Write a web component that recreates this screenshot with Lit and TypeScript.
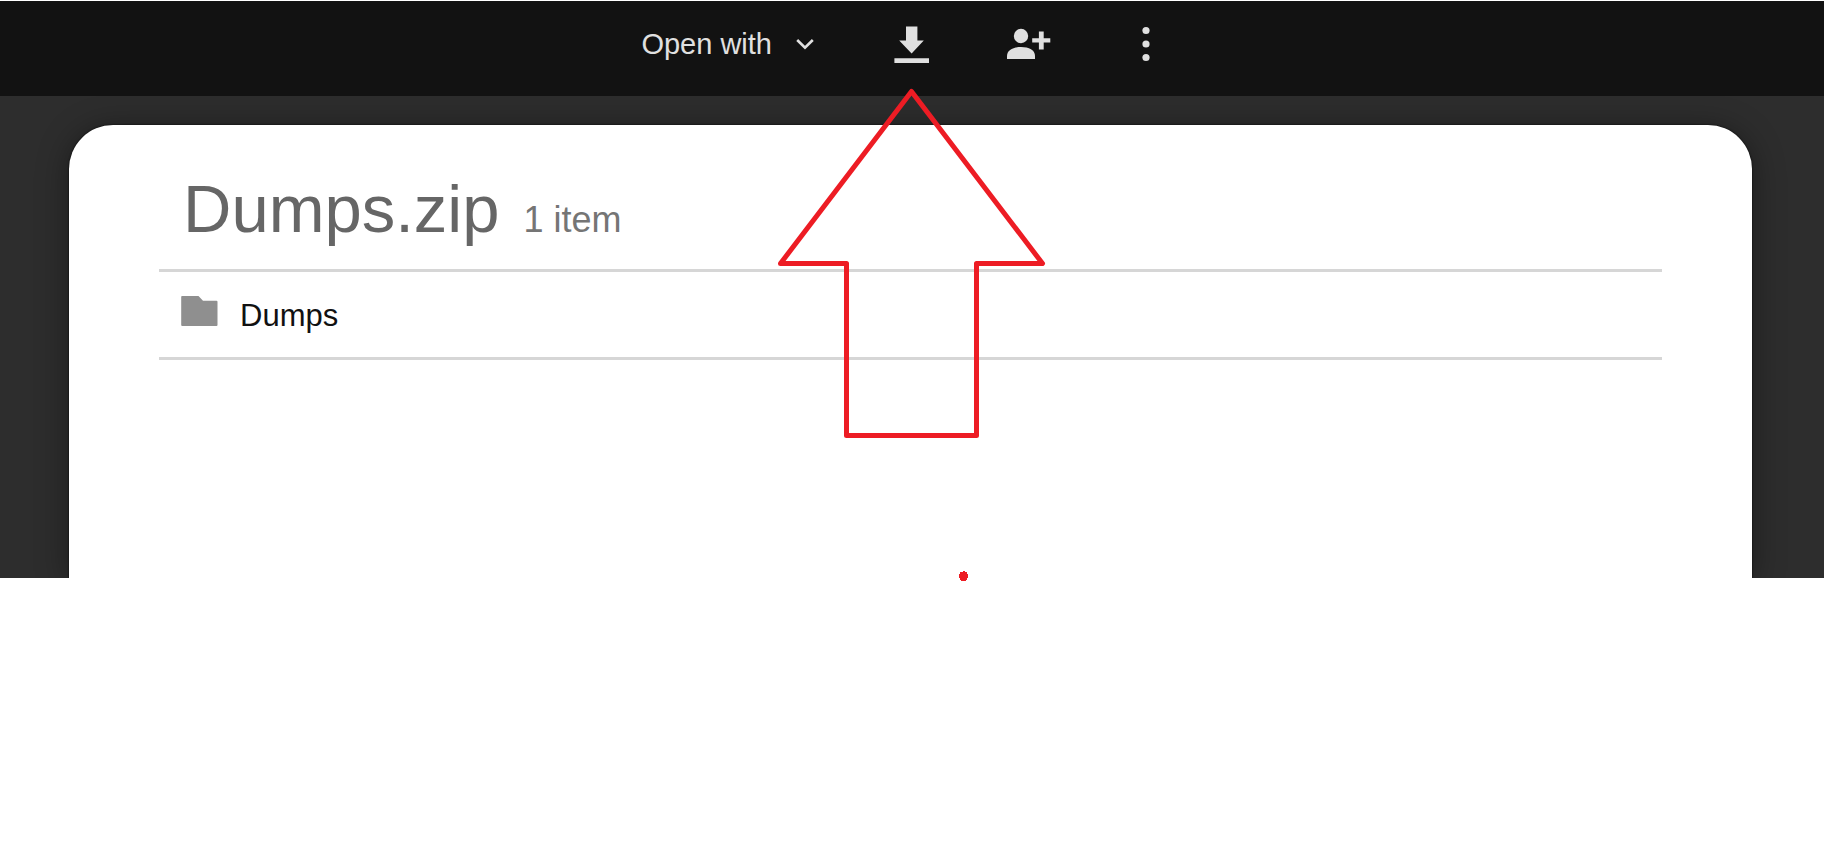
import { LitElement, html, css } from "lit";
import { customElement } from "lit/decorators.js";

interface ArchiveEntry {
  name: string;
}

@customElement("viewer-toolbar")
class ViewerToolbar extends LitElement {
  static styles = css`
    :host {
      display: grid;
      grid-template-columns: 1fr auto 1fr;
      align-items: center;
      height: 95px;
      padding-bottom: 10px;
      box-sizing: border-box;
      background: #121212;
    }
    button {
      display: flex;
      align-items: center;
      padding: 0;
      border: 0;
      background: none;
      color: #e0e0e0;
      font: 29px/34px "Liberation Sans", Arial, sans-serif;
      cursor: pointer;
    }
    svg {
      display: block;
      fill: currentColor;
    }
    .left {
      display: flex;
      justify-content: flex-end;
      padding-right: 80px;
    }
    .open {
      gap: 24px;
    }
    .right {
      display: flex;
      align-items: center;
      gap: 90px;
      padding-left: 77px;
    }
    .chevron {
      fill: none;
      stroke: currentColor;
      stroke-width: 2.6;
    }
  `;

  render() {
    return html`
      <div class="left">
        <button class="open">
          Open with
          <svg class="chevron" width="18" height="12" viewBox="0 0 18 12" aria-hidden="true">
            <path d="M1.2 2 9 9.6 16.8 2" />
          </svg>
        </button>
      </div>
      <button aria-label="Download">
        <svg width="36" height="38" viewBox="0 0 36 38" aria-hidden="true">
          <path d="M12 1.600h11.400v13.800h6.400L17.600 28.600 5.200 15.400H12zM.4 33.200h34.600v5H.4z" />
        </svg>
      </button>
      <div class="right">
        <button aria-label="Share">
          <svg width="44" height="32" viewBox="0 0 44 32" aria-hidden="true">
            <circle cx="14" cy="8" r="7.200" />
            <path d="M0 31v-3C0 22 6 19 14 19s14 3 14 9v3z" />
            <path d="M31.900 3.400h4.800v6.800h6.600v4.400h-6.600v7h-4.800v-7H25.200v-4.400h6.700z" />
          </svg>
        </button>
        <button aria-label="More actions">
          <svg width="10" height="36" viewBox="0 0 10 36" aria-hidden="true">
            <circle cx="5" cy="4.500" r="3.600" />
            <circle cx="5" cy="18" r="3.600" />
            <circle cx="5" cy="31.500" r="3.600" />
          </svg>
        </button>
      </div>
    `;
  }
}

@customElement("archive-card")
class ArchiveCard extends LitElement {
  static styles = css`
    :host {
      display: block;
      padding: 46px 90px 218px;
      border-radius: 44px 44px 0 0;
      background: #fff;
      box-shadow: 0 4px 32px rgba(0, 0, 0, 0.4), 0 0 2px #000;
      font-family: "Liberation Sans", Arial, sans-serif;
    }
    .heading {
      display: flex;
      align-items: baseline;
      gap: 24px;
      padding: 0 24px 22px;
      color: #666;
    }
    h1 {
      margin: 0;
      font-size: 67px;
      line-height: 76px;
      font-weight: 400;
    }
    .count {
      font-size: 36px;
      color: #757575;
    }
    ul {
      margin: 0;
      padding: 0;
      list-style: none;
      border-top: 3px solid #d6d6d6;
    }
    li {
      border-bottom: 3px solid #d6d6d6;
    }
    a {
      display: flex;
      align-items: flex-end;
      gap: 22px;
      height: 85px;
      padding: 0 22px 23px;
      box-sizing: border-box;
      color: #111;
      font-size: 31px;
      line-height: 36px;
      text-decoration: none;
    }
    svg {
      display: block;
      margin-bottom: 8px;
      fill: #8f8f8f;
    }
  `;

  private entries: ArchiveEntry[] = [{ name: "Dumps" }];

  render() {
    return html`
      <div class="heading">
        <h1>Dumps.zip</h1>
        <span class="count">1 item</span>
      </div>
      <ul>
        ${this.entries.map(
          (entry) => html`
            <li>
              <a href="#">
                <svg width="37" height="30" viewBox="0 0 37 30" aria-hidden="true">
                  <path d="M1 0h16.500l4.500 4.700h13.500q1 0 1 1V29q0 1-1 1H1.200q-1 0-1-1V1q0-1 .8-1z" />
                </svg>
                <span>${entry.name}</span>
              </a>
            </li>
          `,
        )}
      </ul>
    `;
  }
}

@customElement("app-root")
class AppRoot extends LitElement {
  static styles = css`
    :host {
      display: block;
      min-height: 100vh;
      background: #fff;
    }
    .viewer {
      position: relative;
      padding-top: 1px;
    }
    .backdrop {
      overflow: hidden;
      padding: 29px 72px 0 69px;
      background: #2d2d2d;
    }
    .marks {
      position: absolute;
      top: 80px;
      left: calc(50% - 140px);
      pointer-events: none;
    }
    .arrow {
      fill: none;
      stroke: #ed1c24;
      stroke-width: 5;
      stroke-linejoin: round;
    }
    .dot {
      fill: #ed1c24;
    }
  `;

  render() {
    return html`
      <main class="viewer">
        <viewer-toolbar></viewer-toolbar>
        <div class="backdrop">
          <archive-card></archive-card>
        </div>
        <svg class="marks" width="280" height="510" viewBox="0 0 280 510" aria-hidden="true">
          <path
            class="arrow"
            d="M139.500 11.500 270.500 183.500H204.500V355.500H74.500V183.500H8.500z"
          />
          <path class="dot" d="M191 491h2v1h2v2h1v4h-1v2h-1v1h-5v-1h-1v-2h-1v-4h1v-2h3z" />
        </svg>
      </main>
    `;
  }
}
